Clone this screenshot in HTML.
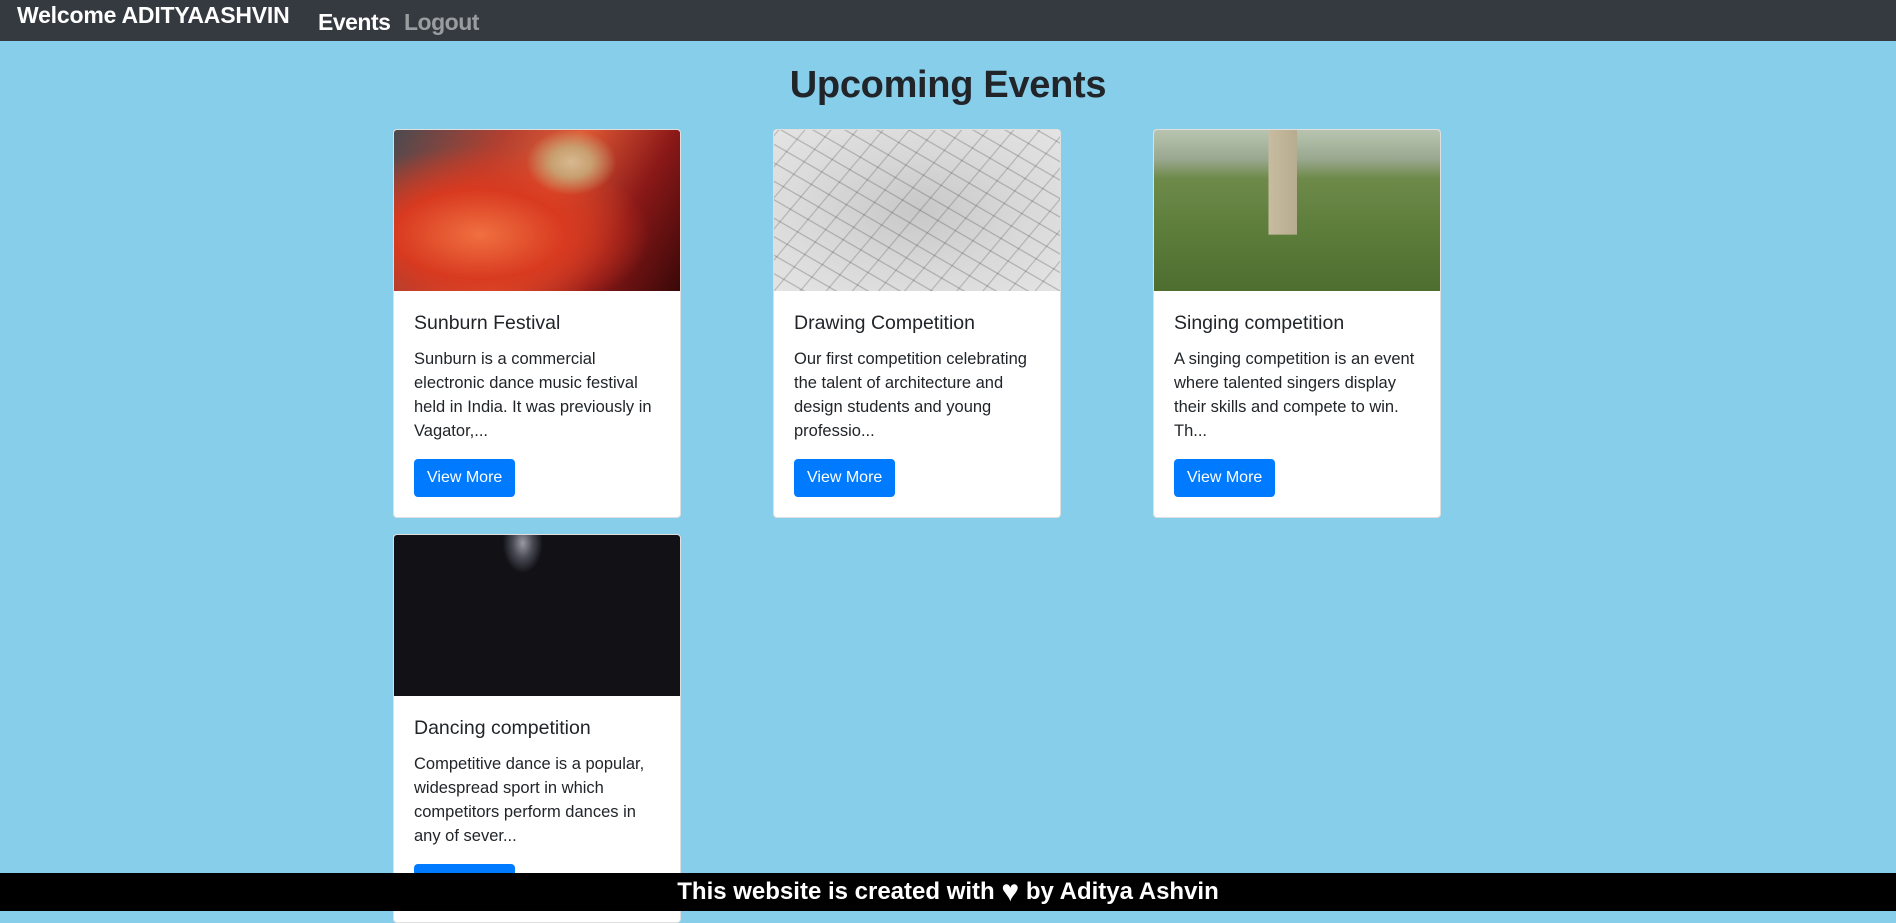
<!DOCTYPE html>
<html><head><meta charset="utf-8"><style>
*{box-sizing:border-box;margin:0;padding:0}
body{width:1896px;height:911px;overflow:hidden;background:#87ceeb;font-family:"Liberation Sans",sans-serif;color:#212529;position:relative}
.nav{position:absolute;left:0;top:0;width:1896px;height:41px;background:#343a40}
.nav .w{position:absolute;left:17px;top:2px;color:#fff;font-size:23px;font-weight:bold;letter-spacing:-0.2px}
.nav .e{position:absolute;left:318px;top:9px;color:#fff;font-size:23px;font-weight:bold;letter-spacing:-0.5px}
.nav .l{position:absolute;left:404px;top:9px;color:rgba(255,255,255,.5);font-size:23px;font-weight:bold;letter-spacing:-0.5px}
h1{position:absolute;left:0;width:1896px;top:61px;text-align:center;font-size:38px;font-weight:bold;line-height:48px;letter-spacing:-0.3px}
.card{position:absolute;width:288px;background:#fff;border:1px solid rgba(0,0,0,.125);border-radius:4px;overflow:hidden}
.img{height:161px;width:100%}
.body{padding:20px}
.t{font-size:19.5px;line-height:24px;margin-bottom:12px}
.p{font-size:16.5px;line-height:24px;margin-bottom:16px;color:#212529}
.b{display:inline-block;background:#007bff;color:#fff;font-size:16px;height:38px;line-height:38px;padding:0 13px;border-radius:4px}
.foot{position:absolute;left:0;top:873px;width:1896px;height:38px;background:#000;color:#fff;text-align:center;font-size:24px;line-height:38px;font-family:"Comic Sans MS","Liberation Sans",cursive;font-weight:bold}
.foot span{font-size:30px;vertical-align:-2px}
</style></head><body>
<div class="nav"><span class="w">Welcome ADITYAASHVIN</span><span class="e">Events</span><span class="l">Logout</span></div>
<h1>Upcoming Events</h1>

<div class="card" style="left:393px;top:129px">
<div class="img" style="background:radial-gradient(ellipse at 62% 20%,#d8b890 0,#c8a070 8%,transparent 18%),radial-gradient(ellipse at 30% 65%,#f07040 0,#d83a20 30%,transparent 60%),linear-gradient(120deg,#4a4a50 0,#b34030 30%,#e05a35 50%,#8a1818 75%,#3a0808 100%)"></div>
<div class="body"><div class="t">Sunburn Festival</div><div class="p">Sunburn is a commercial electronic dance music festival held in India. It was previously in Vagator,...</div><span class="b">View More</span></div></div>

<div class="card" style="left:773px;top:129px">
<div class="img" style="background:repeating-linear-gradient(30deg,transparent 0,transparent 14px,rgba(60,60,60,.35) 15px,transparent 16px),repeating-linear-gradient(-50deg,transparent 0,transparent 18px,rgba(60,60,60,.3) 19px,transparent 20px),radial-gradient(ellipse at 50% 50%,#c8c8c8 0,#d8d8d8 50%,#e4e4e4 100%)"></div>
<div class="body"><div class="t">Drawing Competition</div><div class="p">Our first competition celebrating the talent of architecture and design students and young professio...</div><span class="b">View More</span></div></div>

<div class="card" style="left:1153px;top:129px">
<div class="img" style="background:linear-gradient(90deg,transparent 0,transparent 40%,#c8bca0 40%,#b8ac90 50%,transparent 50%),linear-gradient(180deg,#b8c4b0 0,#9aa890 18%,#6e8a4a 30%,#5e7e3c 60%,#4e6e30 100%);background-size:100% 65%,100% 100%;background-repeat:no-repeat"></div>
<div class="body"><div class="t">Singing competition</div><div class="p">A singing competition is an event where talented singers display their skills and compete to win. Th...</div><span class="b">View More</span></div></div>

<div class="card" style="left:393px;top:534px">
<div class="img" style="background:radial-gradient(ellipse 20px 30px at 45% 5%,#9a9aa5 0,#4a4a55 50%,transparent 100%),#111116"></div>
<div class="body"><div class="t">Dancing competition</div><div class="p">Competitive dance is a popular, widespread sport in which competitors perform dances in any of sever...</div><span class="b">View More</span></div></div>

<div class="foot">This website is created with <span>&#9829;</span> by Aditya Ashvin</div>
</body></html>
